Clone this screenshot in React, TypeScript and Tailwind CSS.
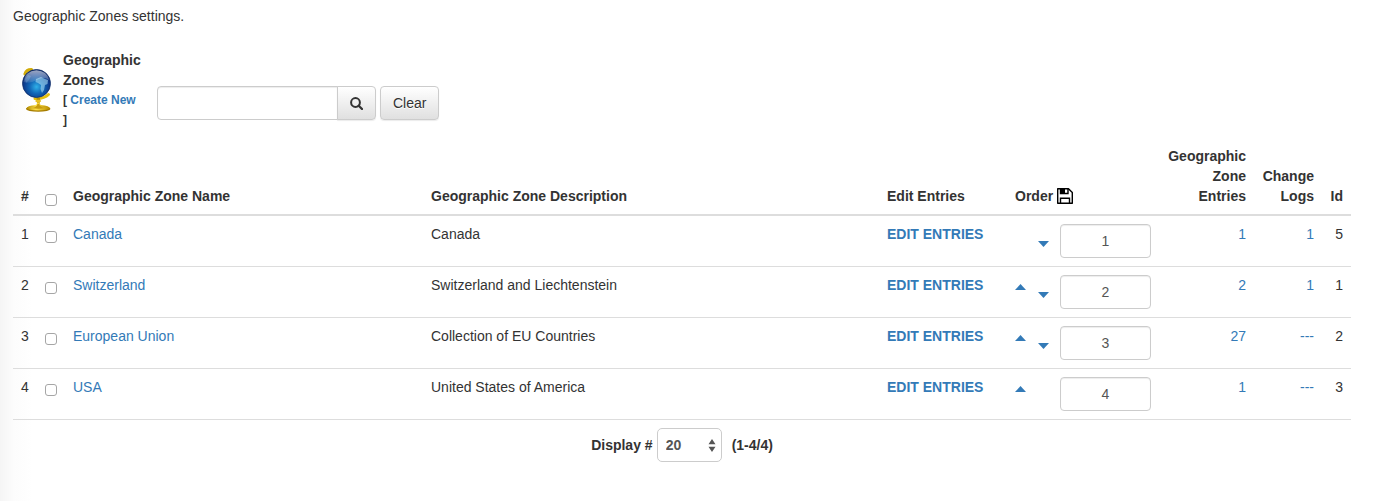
import { useState } from "react";

type Zone = {
  name: string;
  description: string;
  entries: number;
  logs: string;
  id: number;
};

const zones: Zone[] = [
  { name: "Canada", description: "Canada", entries: 1, logs: "1", id: 5 },
  { name: "Switzerland", description: "Switzerland and Liechtenstein", entries: 2, logs: "1", id: 1 },
  { name: "European Union", description: "Collection of EU Countries", entries: 27, logs: "---", id: 2 },
  { name: "USA", description: "United States of America", entries: 1, logs: "---", id: 3 },
];

const checkboxClass =
  "block w-3 h-3 mt-[7px] appearance-none bg-white border border-[#a6a6a6] rounded-[3px] checked:bg-[#337ab7]";
const buttonClass =
  "h-[34px] border border-[#ccc] bg-linear-to-b from-white to-[#e0e0e0] shadow-[0_1px_1px_rgba(0,0,0,0.08)] [text-shadow:0_1px_0_#fff] cursor-pointer";

function GlobeIcon() {
  return (
    <svg width="32" height="46" viewBox="0 0 32 46" aria-hidden="true">
      <defs>
        <radialGradient id="sea" cx="0.5" cy="0.62" r="0.6">
          <stop offset="0" stopColor="#2fb0e8" />
          <stop offset="0.4" stopColor="#1268b8" />
          <stop offset="0.8" stopColor="#0c3788" />
          <stop offset="1" stopColor="#0a2463" />
        </radialGradient>
        <linearGradient id="shine" x1="0" y1="0" x2="0" y2="1">
          <stop offset="0" stopColor="#fff" stopOpacity="0.6" />
          <stop offset="1" stopColor="#fff" stopOpacity="0.1" />
        </linearGradient>
        <linearGradient id="gold" x1="0" y1="0" x2="1" y2="0">
          <stop offset="0" stopColor="#b08a00" />
          <stop offset="0.4" stopColor="#ffe14a" />
          <stop offset="1" stopColor="#b88c00" />
        </linearGradient>
      </defs>
      <path d="M4 7Q5.500 2.500 10.500 2.600" fill="none" stroke="#d1ab08" strokeWidth="3.200" strokeLinecap="round" />
      <path d="M27.500 27.500Q23 32 14 31.500" fill="none" stroke="#e6c010" strokeWidth="3" strokeLinecap="round" />
      <path d="M15.500 31h3.500l-.6 8h-2.200z" fill="#b89006" />
      <ellipse cx="17.200" cy="34" rx="3" ry="1.300" fill="#e8c020" />
      <path d="M5 42Q6 38.500 14.500 38Q16 37.500 16.200 35.500h2Q18.500 37.500 20 38Q28.500 38.500 29.500 42z" fill="url(#gold)" />
      <ellipse cx="17.200" cy="42" rx="12.200" ry="2.800" fill="#a67c00" />
      <ellipse cx="17.200" cy="41.200" rx="11.600" ry="2.200" fill="url(#gold)" />
      <path d="M11 41Q16 40 16.500 37h1.500Q19 40 24 41Q17.500 42.500 11 41z" fill="#c79c10" />
      <circle cx="15.500" cy="16.500" r="14" fill="url(#sea)" stroke="#102e68" strokeWidth=".8" />
      <path
        d="M15 12l5-2 4 2 3 1-.5 4-2.500 1-1 5-2 3-1.500-4 .5-4-3-2-2.500-1z"
        fill="#a8dcf3"
        opacity=".6"
      />
      <path d="M4 12l3-4 3 1-2 4-3 3z" fill="#5b9bd5" opacity=".4" />
      <path d="M2.500 15Q4 4 15.500 3.200Q26 4 28.300 13Q22 9 16 13Q9 17 2.500 15z" fill="url(#shine)" />
    </svg>
  );
}

function SearchIcon() {
  return (
    <svg width="13" height="13" viewBox="0 0 13 13" fill="none" stroke="#333" aria-hidden="true">
      <circle cx="5.500" cy="5.500" r="4.400" strokeWidth="2" />
      <path d="M8.700 8.700L12 12" strokeWidth="2.300" strokeLinecap="round" />
    </svg>
  );
}

function SaveIcon() {
  return (
    <svg width="16" height="16" viewBox="0 0 16 16" fill="none" stroke="#000" strokeWidth="1.400" aria-hidden="true">
      <path d="M.7.7h10.800l3.800 3.800v10.800H.7z" strokeLinejoin="round" />
      <path d="M3.500.7v4.800h7.500V.7" />
      <path d="M4 .7h4v4.300H4z" fill="#000" stroke="none" />
      <path d="M3.500 15.300v-5h9v5" />
    </svg>
  );
}

function OrderInput({ name, value }: { name: string; value: number }) {
  return (
    <input
      type="text"
      aria-label={`Order of ${name}`}
      defaultValue={value}
      className="w-[91px] h-[34px] px-3 text-center text-[#555] bg-white border border-[#ccc] rounded shadow-[inset_0_1px_1px_rgba(0,0,0,0.075)]"
    />
  );
}

export default function App() {
  const [query, setQuery] = useState("");

  return (
    <div className="min-h-screen pl-[13px] pr-[26px] pt-1.5 pb-9 font-['Liberation_Sans',Arial,sans-serif] text-sm leading-5 text-[#333] bg-[linear-gradient(to_right,#f5f5f5,#fcfcfc_14px,#fff_32px)]">
      <p>Geographic Zones settings.</p>

      <div className="flex items-center mt-6 pl-2">
        <GlobeIcon />
        <div className="w-[86px] ml-2.5 pr-2 font-bold">
          <h1>Geographic Zones</h1>
          <div className="text-xs leading-5">
            [ <a href="#new" className="text-[#337ab7]">Create New</a> ]
          </div>
        </div>
        <form className="flex ml-2 mt-[26px]" onSubmit={(e) => e.preventDefault()}>
          <input
            type="text"
            aria-label="Search zones"
            value={query}
            onChange={(e) => setQuery(e.target.value)}
            className="w-[181px] h-[34px] px-3 bg-white border border-[#ccc] rounded-l shadow-[inset_0_1px_1px_rgba(0,0,0,0.075)]"
          />
          <button type="submit" aria-label="Search" className={`${buttonClass} -ml-px w-[39px] flex items-center justify-center rounded-r`}>
            <SearchIcon />
          </button>
          <button type="button" onClick={() => setQuery("")} className={`${buttonClass} ml-1 px-3 rounded`}>
            Clear
          </button>
        </form>
      </div>

      <table className="w-full mt-2 table-fixed border-separate border-spacing-0 [&_td]:p-2 [&_th]:p-2 [&_td]:align-top [&_th]:align-bottom [&_td]:border-b [&_th]:border-b-2 [&_td]:border-[#ddd] [&_th]:border-[#ddd]">
        <colgroup>
          <col className="w-6" />
          <col className="w-7" />
          <col className="w-[358px]" />
          <col />
          <col className="w-32" />
          <col className="w-[152px]" />
          <col className="w-[95px]" />
          <col className="w-[68px]" />
          <col className="w-[29px]" />
        </colgroup>
        <thead>
          <tr className="text-left">
            <th>#</th>
            <th>
              <input type="checkbox" aria-label="Select all zones" className={checkboxClass} />
            </th>
            <th>Geographic Zone Name</th>
            <th>Geographic Zone Description</th>
            <th>Edit Entries</th>
            <th>
              <div className="flex items-center gap-1">
                Order
                <button type="button" aria-label="Save order" className="cursor-pointer">
                  <SaveIcon />
                </button>
              </div>
            </th>
            <th className="text-right">Geographic Zone Entries</th>
            <th className="text-right">Change Logs</th>
            <th className="text-right">Id</th>
          </tr>
        </thead>
        <tbody>
          {zones.map((zone, i) => (
            <tr key={zone.id}>
              <td>{i + 1}</td>
              <td>
                <input type="checkbox" aria-label={`Select ${zone.name}`} className={checkboxClass} />
              </td>
              <td>
                <a href="#zone" className="text-[#337ab7]">{zone.name}</a>
              </td>
              <td>{zone.description}</td>
              <td>
                <a href="#entries" className="font-bold text-[#337ab7]">EDIT ENTRIES</a>
              </td>
              <td>
                <div className="flex justify-between">
                  {/* first row can't go up, last row can't go down */}
                  <div className="flex gap-3 pt-2">
                    <button type="button" aria-label="Move up" className={`h-2 ${i === 0 ? "invisible" : "cursor-pointer"}`}>
                      <svg width="11" height="6" viewBox="0 0 11 6" fill="#337ab7">
                        <path d="M0 6L5.500 0L11 6z" />
                      </svg>
                    </button>
                    <button
                      type="button"
                      aria-label="Move down"
                      className={`h-2 mt-2 ${i === zones.length - 1 ? "invisible" : "cursor-pointer"}`}
                    >
                      <svg width="11" height="6" viewBox="0 0 11 6" fill="#337ab7">
                        <path d="M0 0L5.500 6L11 0z" />
                      </svg>
                    </button>
                  </div>
                  <OrderInput name={zone.name} value={i + 1} />
                </div>
              </td>
              <td className="text-right">
                <a href="#entries" className="text-[#337ab7]">{zone.entries}</a>
              </td>
              <td className="text-right">
                <a href="#logs" className="text-[#337ab7]">{zone.logs}</a>
              </td>
              <td className="text-right">{zone.id}</td>
            </tr>
          ))}
        </tbody>
      </table>

      <div className="flex items-center justify-center mt-2 font-bold">
        <label htmlFor="limit">Display #</label>
        <div className="relative ml-1 mr-2.5">
          <select
            id="limit"
            defaultValue="20"
            className="block w-[65px] h-[34px] pl-2 appearance-none text-[#555] bg-white border border-[#ccc] rounded-[5px]"
          >
            <option>10</option>
            <option>20</option>
            <option>50</option>
          </select>
          <svg className="absolute right-1.5 top-[11px] pointer-events-none" width="8" height="13" viewBox="0 0 8 13" fill="#555">
            <path d="M.5 5.300L4 0l3.500 5.300zM.5 7.700L4 13l3.500-5.300z" />
          </svg>
        </div>
        <span>(1-4/4)</span>
      </div>
    </div>
  );
}
